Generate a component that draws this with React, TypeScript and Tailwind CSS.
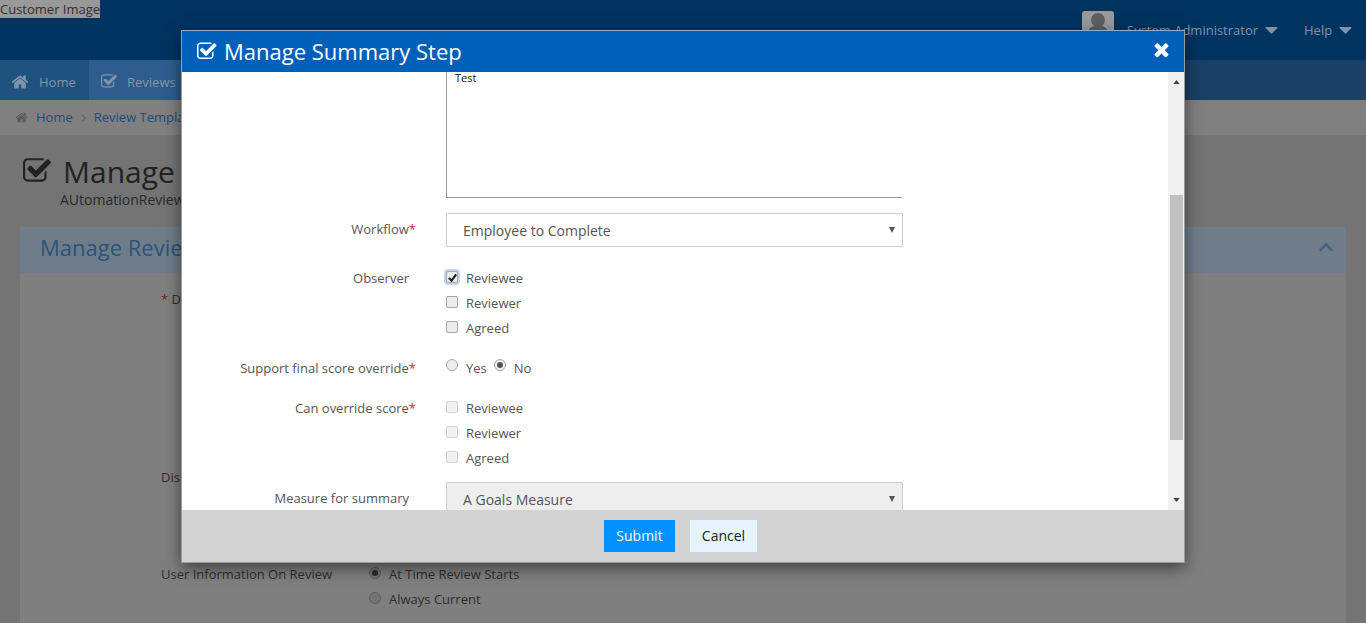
import { FaChevronRight, FaChevronUp } from 'react-icons/fa';

const font = "font-['Open_Sans',_'Noto_Sans',_sans-serif]";

// Font Awesome 4 glyphs, the FA5 ones in react-icons are too thin for this screen
const CheckSquareIcon = ({ className = '' }: { className?: string }) => (
  <svg className={`flex-shrink-0 ${className}`} viewBox="0 0 1792 1792" fill="currentColor">
    <path d="M1408 930v318q0 119-84.5 203.5t-203.5 84.5h-832q-119 0-203.5-84.5t-84.5-203.5v-832q0-119 84.5-203.5t203.5-84.5h832q63 0 117 25 15 7 18 23 3 17-9 29l-49 49q-10 10-23 10-3 0-9-2-23-6-45-6h-832q-66 0-113 47t-47 113v832q0 66 47 113t113 47h832q66 0 113-47t47-113v-254q0-13 9-22l64-64q10-10 23-10 6 0 12 3 20 8 20 29zm231-489l-814 814q-24 24-57 24t-57-24l-430-430q-24-24-24-57t24-57l110-110q24-24 57-24t57 24l263 263 647-647q24-24 57-24t57 24l110 110q24 24 24 57t-24 57z" />
  </svg>
);

const HomeIcon = ({ className = '' }: { className?: string }) => (
  <svg className={`flex-shrink-0 ${className}`} viewBox="0 0 1792 1792" fill="currentColor">
    <path d="M1472 992v480q0 26-19 45t-45 19h-384v-384h-256v384h-384q-26 0-45-19t-19-45v-480q0-1 .5-3t.5-3l575-474 575 474q1 2 1 6zm223-69l-62 74q-8 9-21 11h-3q-13 0-21-7l-692-577-692 577q-12 8-24 7-13-2-21-11l-62-74q-8-10-7-23.5t11-21.5l719-599q32-26 76-26t76 26l244 204v-195q0-14 9-23t23-9h192q14 0 23 9t9 23v408l219 182q10 8 11 21.5t-7 23.5z" />
  </svg>
);

const TimesIcon = ({ className = '' }: { className?: string }) => (
  <svg className={`flex-shrink-0 ${className}`} viewBox="0 0 1792 1792" fill="currentColor">
    <path d="M1490 1322q0 40-28 68l-136 136q-28 28-68 28t-68-28l-294-294-294 294q-28 28-68 28t-68-28l-136-136q-28-28-28-68t28-68l294-294-294-294q-28-28-28-68t28-68l136-136q28-28 68-28t68 28l294 294 294-294q28-28 68-28t68 28l136 136q28 28 28 68t-28 68l-294 294 294 294q28 28 28 68z" />
  </svg>
);

const HeaderCaret = ({ className = '' }: { className?: string }) => (
  <svg className={`w-[13px] h-[7px] flex-shrink-0 ${className}`} viewBox="0 0 13 7" fill="currentColor">
    <path d="M1 0 H12 Q13 0 12.4 1 L7 6.6 Q6.5 7 6 6.6 L0.6 1 Q0 0 1 0 Z" />
  </svg>
);

const SelectCaret = () => (
  <svg className="w-[6px] h-[6px] -mt-[1px]" viewBox="0 0 7 7" fill="#555">
    <path d="M0 0 H7 L3.5 7 Z" />
  </svg>
);

const CheckBox = ({ checked = false, disabled = false }: { checked?: boolean; disabled?: boolean }) => (
  <span
    className={`relative block w-3 h-3 rounded-[2px] border flex-shrink-0 ${
      disabled ? 'border-[#d4d4d4] bg-[#f1f1f1]' : 'border-[#a6a6a6] bg-[#ececec]'
    } ${checked ? 'shadow-[0_0_0_2px_#c5d4ea]' : ''}`}
  >
    {checked && (
      <svg className="absolute left-[0.5px] top-[0.5px] w-[9px] h-[9px]" viewBox="0 0 10 10">
        <path d="M1 5.5 L4 8.5 L9 1.5" fill="none" stroke="#222" strokeWidth="2.4" />
      </svg>
    )}
  </span>
);

const Radio = ({ checked = false, dark = false }: { checked?: boolean; dark?: boolean }) => (
  <span
    className={`flex items-center justify-center w-3 h-3 rounded-full border flex-shrink-0 ${
      dark ? 'border-[#5c5c5c] bg-[#747474]' : 'border-[#a6a6a6] bg-[#eeeeee]'
    }`}
  >
    {checked && <span className={`block w-[6px] h-[6px] rounded-full ${dark ? 'bg-[#2c2c2c]' : 'bg-[#555]'}`} />}
  </span>
);

const CheckList = ({ disabled = false, first = false }: { disabled?: boolean; first?: boolean }) => (
  <div className="flex flex-col">
    {['Reviewee', 'Reviewer', 'Agreed'].map((name, i) => (
      <div key={name} className="flex items-center h-[25px]">
        <div className="-mt-[3px]">
          <CheckBox disabled={disabled} checked={first && i === 0} />
        </div>
        <span className="ml-2 text-[13px] text-[#555]">{name}</span>
      </div>
    ))}
  </div>
);

const Label = ({ text, required = false }: { text: string; required?: boolean }) => (
  <div className={`w-[234px] text-right text-[13px] leading-[25px] text-[#555] ${required ? '' : 'pr-[7px]'}`}>
    {text}
    {required && <span className="text-[#d9232e]">*</span>}
  </div>
);

const Background = () => (
  <div className="w-[1366px] h-[623px] overflow-hidden bg-[#747474]">
    <header className="h-[60px] bg-[#003360] flex justify-between">
      <div>
        <span className="block w-[100px] h-[18px] leading-[18px] bg-[#999] text-[13px] text-[#2e2e2e] whitespace-nowrap">Customer Image</span>
      </div>
      <div className="flex items-start pt-[11px] text-[13px] text-[#7f93a8]">
        <div className="w-8 h-8 rounded-[3px] bg-[#999]">
          <svg className="w-8 h-8" viewBox="0 0 32 32" fill="#5f5f5f">
            <circle cx="16" cy="9" r="7" />
            <path d="M4 32 Q4 14 16 14 Q28 14 28 32 Z" />
          </svg>
        </div>
        <span className="ml-[13px] mt-[10px] w-[130px] whitespace-nowrap">System Administrator</span>
        <HeaderCaret className="ml-2 mt-[16px]" />
        <span className="ml-[26px] mt-[10px] w-[29px]">Help</span>
        <HeaderCaret className="ml-[6px] mt-[16px] mr-[14px]" />
      </div>
    </header>
    <nav className="h-10 bg-[#1a4066] flex text-[13px] text-[#8195aa]">
      <div className="w-[89px] bg-[#1f527f] flex items-center pl-[11px] pt-[6px]">
        <HomeIcon className="w-[18px] h-[18px] -mt-[3px]" />
        <span className="ml-[10px]">Home</span>
      </div>
      <div className="w-[110px] bg-[#2d5d8c] flex items-center pl-3 pt-[6px]">
        <CheckSquareIcon className="w-[17px] h-[17px] -mt-[3px]" />
        <span className="ml-[9px]">Reviews</span>
      </div>
    </nav>
    <div className="h-[35px] bg-[#808080] flex items-center pl-[15px] text-[13px] text-[#264a75]">
      <HomeIcon className="w-[13px] h-[13px] text-[#5a5a5a]" />
      <span className="ml-2">Home</span>
      <FaChevronRight className="ml-[7px] mr-[6px] w-2 h-2 text-[#666]" />
      <span>Review Templates</span>
    </div>
    <div className="pl-[23px] pt-[18px] h-[92px]">
      <div className="flex items-center text-[#222]">
        <CheckSquareIcon className="w-[30px] h-[30px] -mt-[2px]" />
        <span className="ml-[10px] text-[30px] leading-[38px]">Manage</span>
      </div>
      <div className="ml-[37px] -mt-[2px] text-[14px] text-[#2a2a2a]">AUtomationReview</div>
    </div>
    <section className="mx-5 h-[400px] bg-[#7f7f7f]">
      <div className="h-[46px] bg-[#6f7d8a] flex items-center justify-between pl-5 pr-3 pb-[6px]">
        <span className="text-[22px] text-[#2c5378]">Manage Review</span>
        <FaChevronUp className="w-4 h-4 text-[#44627f]" />
      </div>
      <div className="pl-[141px] text-[13px] text-[#2e2e2e]">
        <div className="pt-4 leading-5"><span className="text-[#7a1f1f]">*</span> Description</div>
        <div className="mt-[158px] leading-5">Display</div>
        <div className="mt-[75px] flex">
          <span className="w-[208px] leading-[25px]">User Information On Review</span>
          <div className="flex flex-col">
            <div className="flex items-center h-[25px]"><div className="-mt-[3px]"><Radio checked dark /></div><span className="ml-2">At Time Review Starts</span></div>
            <div className="flex items-center h-[25px]"><div className="-mt-[3px]"><Radio dark /></div><span className="ml-2">Always Current</span></div>
          </div>
        </div>
      </div>
    </section>
  </div>
);

export default function App() {
  return (
    <div className={`relative w-[1366px] h-[623px] overflow-hidden ${font}`}>
      <Background />

      <div className="absolute left-[181px] top-[30px] w-[1004px] h-[533px] flex flex-col border border-t-[#8fb0d4] border-x-[#9a9a9a] border-b-[#9a9a9a] shadow-[0_5px_15px_rgba(0,0,0,0.5)]">
        <div className="h-[41px] bg-[#0060b9] flex items-center justify-between pl-[15px] pr-3 text-white flex-shrink-0">
          <div className="flex items-center">
            <CheckSquareIcon className="w-[21px] h-[21px]" />
            <span className="ml-[6px] text-[22px]">Manage Summary Step</span>
          </div>
          <TimesIcon className="w-[21px] h-[21px] -mt-[5px]" />
        </div>

        <div className="flex h-[438px] bg-white flex-shrink-0">
          <div className="flex-1 h-full">
            <div className="flex">
              <div className="w-[264px]" />
              <div className="w-[456px] h-[126px] border-l border-b border-[#999] pl-2 pt-[1px] text-[11px] leading-[9px] text-[#111]">Test</div>
            </div>

            <div className="flex mt-[15px]">
              <div className="pt-1"><Label text="Workflow" required /></div>
              <div className="ml-[30px] w-[457px] h-[34px] border border-[#ccc] rounded-[1px] flex items-center justify-between pl-4 pr-[7px] text-[14px] text-[#555]">
                <span>Employee to Complete</span>
                <SelectCaret />
              </div>
            </div>

            <div className="flex mt-[19px]">
              <Label text="Observer" />
              <div className="ml-[30px]"><CheckList first /></div>
            </div>

            <div className="flex mt-[15px]">
              <Label text="Support final score override" required />
              <div className="ml-[30px] flex items-center h-[25px] text-[13px] text-[#555]">
                <div className="-mt-[7px]"><Radio /></div>
                <span className="ml-2">Yes</span>
                <div className="-mt-[7px] ml-[7px]"><Radio checked /></div>
                <span className="ml-2">No</span>
              </div>
            </div>

            <div className="flex mt-[15px]">
              <Label text="Can override score" required />
              <div className="ml-[30px]"><CheckList disabled /></div>
            </div>

            <div className="flex mt-[11px]">
              <div className="pt-1"><Label text="Measure for summary" /></div>
              <div className="ml-[30px] w-[457px] h-[34px] border border-[#ccc] bg-[#eeeeee] rounded-[1px] flex items-center justify-between pl-4 pr-[7px] text-[14px] text-[#555]">
                <span>A Goals Measure</span>
                <SelectCaret />
              </div>
            </div>
          </div>

          <div className="w-4 h-full bg-[#f0f0f0] relative flex-shrink-0">
            <div className="absolute left-[2px] top-[123px] w-[13px] h-[245px] bg-[#c1c1c1]" />
            <svg className="absolute left-[5px] top-[8px] w-[7px] h-[4px]" viewBox="0 0 8 5"><path d="M4 0 L8 5 L0 5 Z" fill="#444" /></svg>
            <svg className="absolute left-[5px] bottom-[8px] w-[7px] h-[4px]" viewBox="0 0 8 5"><path d="M0 0 L8 0 L4 5 Z" fill="#444" /></svg>
          </div>
        </div>

        {/* relative so the footer paints over the last select, which runs past the scroll area */}
        <div className="relative flex-1 bg-[#d3d3d3] flex items-center justify-center gap-[15px] pr-[5px]">
          <div className="w-[71px] h-8 pb-[2px] bg-[#0090ff] text-white text-[14px] flex items-center justify-center">Submit</div>
          <div className="w-[67px] h-8 pb-[2px] bg-[#e5f3fd] text-[#222] text-[14px] flex items-center justify-center">Cancel</div>
        </div>
      </div>
    </div>
  );
}
